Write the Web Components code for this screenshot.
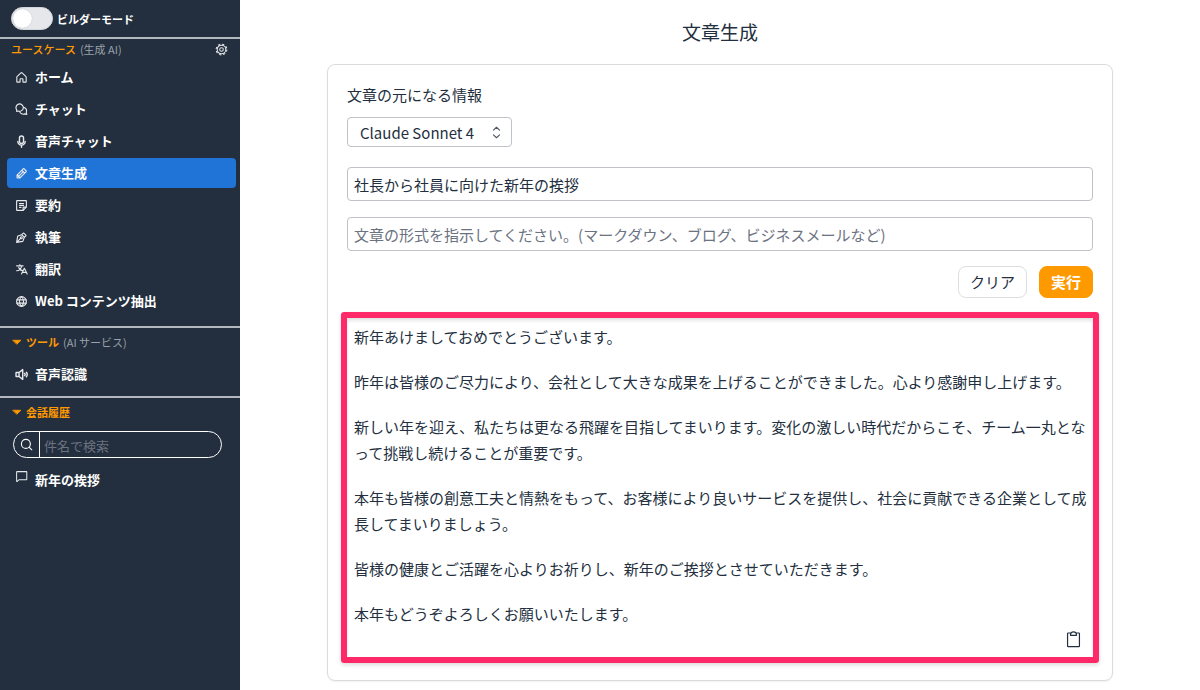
<!DOCTYPE html>
<html lang="ja">
<head>
<meta charset="utf-8">
<meta name="viewport" content="width=device-width, initial-scale=1">
<title>文章生成</title>
<style>
  body {
    margin: 0;
    background: #fff;
    color: #232f3e;
    font-family: "Noto Sans CJK JP", "Noto Sans", sans-serif;
    font-size: 15px;
    line-height: 26px;
  }
</style>
</head>
<body>
<app-layout>
  <app-sidebar slot="sidebar"></app-sidebar>
  <generate-page></generate-page>
</app-layout>

<script>
// Outline icons on a 256 grid
const ICONS = {
  gear: '<circle cx="128" cy="128" r="36"/><circle cx="128" cy="128" r="84"/><circle cx="128" cy="128" r="106" stroke-dasharray="44 39.2" stroke-linecap="butt"/>',
  house: '<path d="M156 212v-52a8 8 0 0 0-8-8h-40a8 8 0 0 0-8 8v52a8 8 0 0 1-8 8H44a8 8 0 0 1-8-8v-96a8 8 0 0 1 3-6l83-77a8 8 0 0 1 12 0l83 77a8 8 0 0 1 3 6v96a8 8 0 0 1-8 8h-48a8 8 0 0 1-8-8Z"/>',
  chats: '<path d="M34 134a72 72 0 1 1 32 24l-34 8Z"/><path d="M170 86a68 68 0 0 1 52 96l10 42-42-10a72 72 0 0 1-98-46"/>',
  mic: '<rect x="88" y="20" width="80" height="146" rx="40"/><path d="M128 202v38M200 128a72 72 0 0 1-144 0"/>',
  pencil: '<path d="M93 216H48a8 8 0 0 1-8-8v-45a8 8 0 0 1 2-5L165 34a8 8 0 0 1 11 0l45 45a8 8 0 0 1 0 11L98 214a8 8 0 0 1-5 2ZM136 64l56 56M164 92l-96 96M43 156l57 57"/>',
  note: '<path d="M88 92h80M88 128h80M88 164h32M157 224H40a8 8 0 0 1-8-8V40a8 8 0 0 1 8-8h176a8 8 0 0 1 8 8v117a8 8 0 0 1-2 5l-60 60a8 8 0 0 1-5 2ZM222 160h-62v62"/>',
  pen: '<circle cx="124" cy="132" r="20"/><path d="M32 224l78-78M32 224l118-20a8 8 0 0 0 6-5l28-75-52-52-75 28a8 8 0 0 0-5 6ZM184 124l30-30a8 8 0 0 0 0-12l-40-40a8 8 0 0 0-12 0l-30 30"/>',
  translate: '<path d="M240 216l-56-112-56 112M144 184h80M96 32v24M32 56h128M128 56a96 96 0 0 1-96 96M73 88a96 96 0 0 0 87 64"/>',
  globe: '<circle cx="128" cy="128" r="96"/><path d="M168 128c0 64-40 96-40 96s-40-32-40-96 40-96 40-96 40 32 40 96ZM37 96h182M37 160h182"/>',
  speaker: '<path d="M80 168H28a8 8 0 0 1-8-8V96a8 8 0 0 1 8-8h52l72-56v192ZM80 88v80M190 106a32 32 0 0 1 0 44M224 84a72 72 0 0 1 0 88"/>',
  search: '<circle cx="116" cy="116" r="88"/><path d="M178 178l54 54"/>',
  chat: '<path d="M78 192l-34 34a8 8 0 0 1-12-6V40a8 8 0 0 1 8-8h184a8 8 0 0 1 8 8v144a8 8 0 0 1-8 8Z"/>',
  clipboard: '<path d="M168 40h32a8 8 0 0 1 8 8v168a8 8 0 0 1-8 8H56a8 8 0 0 1-8-8V48a8 8 0 0 1 8-8h32M88 72v-8a40 40 0 0 1 80 0v8Z"/>',
  updown: '<path d="M68 80l60-56 60 56M68 176l60 56 60-56"/>',
  caret: '<path d="M28 84h200L128 180Z" fill="currentColor"/>'
};

class AppIcon extends HTMLElement {
  connectedCallback() {
    const weight = this.getAttribute('weight') || 22;
    this.attachShadow({ mode: 'open' });
    this.shadowRoot.innerHTML = `
      <style>
        :host { display: inline-flex; flex: none; width: 13px; height: 13px; }
        svg { width: 100%; height: 100%; }
      </style>
      <svg viewBox="0 0 256 256" fill="none" stroke="currentColor" stroke-width="${weight}"
        stroke-linecap="round" stroke-linejoin="round" aria-hidden="true">${ICONS[this.getAttribute('name')]}</svg>
    `;
  }
}
customElements.define('app-icon', AppIcon);

class AppLayout extends HTMLElement {
  connectedCallback() {
    this.attachShadow({ mode: 'open' });
    this.shadowRoot.innerHTML = `
      <style>
        :host { display: grid; grid-template-columns: 240px 1fr; min-height: 100vh; }
        main { min-width: 0; }
      </style>
      <slot name="sidebar"></slot>
      <main><slot></slot></main>
    `;
  }
}
customElements.define('app-layout', AppLayout);

class ModeSwitch extends HTMLElement {
  connectedCallback() {
    this.attachShadow({ mode: 'open' });
    this.shadowRoot.innerHTML = `
      <style>
        :host { display: block; padding: 7px 11px; }
        label {
          display: flex;
          align-items: center;
          gap: 4px;
          font-size: 11px;
          font-weight: 700;
          line-height: 16px;
          cursor: pointer;
        }
        input {
          appearance: none;
          box-sizing: border-box;
          display: flex;
          width: 42px;
          height: 23px;
          margin: 0;
          padding: 1px;
          border: 1px solid #d5d7db;
          border-radius: 12px;
          background: #e5e7eb;
        }
        input::before {
          content: '';
          width: 19px;
          height: 19px;
          border-radius: 50%;
          background: #fff;
          box-shadow: 0 0 1px #9ca3af;
        }
        input:checked { justify-content: flex-end; background: #2074d8; }
      </style>
      <label><input type="checkbox" role="switch"><slot></slot></label>
    `;
  }
}
customElements.define('mode-switch', ModeSwitch);

class NavItem extends HTMLElement {
  connectedCallback() {
    this.attachShadow({ mode: 'open' });
    this.shadowRoot.innerHTML = `
      <style>
        :host { display: block; }
        a {
          display: flex;
          align-items: center;
          gap: 7px;
          padding: 5px 8px;
          border-radius: 4px;
          color: #fff;
          font-size: 13px;
          font-weight: 700;
          line-height: 20px;
          text-decoration: none;
        }
        a:hover { background: #34435a; }
        app-icon { color: #e8eaed; }
        :host([active]) a { background: #2074d8; }
        :host([history]) app-icon { align-self: start; }
      </style>
      <a href="#${this.getAttribute('to') || ''}">
        <app-icon name="${this.getAttribute('icon')}" weight="${this.getAttribute('weight') || 22}"></app-icon>
        <span><slot></slot></span>
      </a>
    `;
  }
}
customElements.define('nav-item', NavItem);

class NavSection extends HTMLElement {
  connectedCallback() {
    const note = this.getAttribute('note');
    this.attachShadow({ mode: 'open' });
    this.shadowRoot.innerHTML = `
      <style>
        :host { display: block; border-top: 2px solid #b3b7be; }
        summary {
          display: flex;
          align-items: center;
          gap: 4px;
          padding: 6px 12px 9px;
          color: #ff9900;
          font-size: 11px;
          font-weight: 700;
          line-height: 16px;
          list-style: none;
          cursor: pointer;
        }
        app-icon { width: 10px; height: 10px; }
        small { color: #9aa1ab; font-size: 11px; font-weight: 400; }
      </style>
      <details open>
        <summary>
          <app-icon name="caret"></app-icon>
          <span>${this.getAttribute('heading')}</span>
          ${note ? `<small>${note}</small>` : ''}
        </summary>
        <slot></slot>
      </details>
    `;
  }
}
customElements.define('nav-section', NavSection);

class HistorySearch extends HTMLElement {
  connectedCallback() {
    this.attachShadow({ mode: 'open' });
    this.shadowRoot.innerHTML = `
      <style>
        :host { display: block; margin: 2px 18px 7px 13px; }
        label {
          display: flex;
          box-sizing: border-box;
          height: 27px;
          overflow: hidden;
          border: 1px solid #fff;
          border-radius: 14px;
        }
        app-icon { padding: 6px; color: #fff; }
        input {
          flex: 1;
          min-width: 0;
          padding: 2px 4px 0;
          border: 0;
          border-left: 1px solid #fff;
          outline: 0;
          background: none;
          color: #fff;
          font: inherit;
          font-size: 13px;
        }
        input::placeholder { color: #6b7280; opacity: 1; }
      </style>
      <label>
        <app-icon name="search"></app-icon>
        <input type="text" placeholder="件名で検索" aria-label="件名で検索">
      </label>
    `;
  }
}
customElements.define('history-search', HistorySearch);

class AppSidebar extends HTMLElement {
  connectedCallback() {
    this.attachShadow({ mode: 'open' });
    this.shadowRoot.innerHTML = `
      <style>
        :host { display: block; background: #232f3e; color: #fff; }
        header {
          display: flex;
          align-items: center;
          gap: 4px;
          padding: 1px 12px 3px 11px;
          border-top: 2px solid #b3b7be;
          font-size: 11px;
          line-height: 18px;
        }
        h2 { margin: 0; color: #ff9900; font-size: 11px; font-weight: 500; }
        small { flex: 1; color: #9aa1ab; font-size: 11px; }
        button { display: flex; padding: 0; border: 0; background: none; color: #e5e7eb; cursor: pointer; }
        nav { display: grid; gap: 2px; padding: 0 4px 7px 7px; }
        nav.cases { padding: 1px 4px 10px 7px; }
      </style>
      <mode-switch>ビルダーモード</mode-switch>
      <header>
        <h2>ユースケース</h2>
        <small>(生成 AI)</small>
        <button type="button" aria-label="設定"><app-icon name="gear" weight="20"></app-icon></button>
      </header>
      <nav class="cases">
        <nav-item icon="house" to="home">ホーム</nav-item>
        <nav-item icon="chats" to="chat">チャット</nav-item>
        <nav-item icon="mic" weight="28" to="voice">音声チャット</nav-item>
        <nav-item icon="pencil" to="generate" active>文章生成</nav-item>
        <nav-item icon="note" to="summarize">要約</nav-item>
        <nav-item icon="pen" to="writer">執筆</nav-item>
        <nav-item icon="translate" to="translate">翻訳</nav-item>
        <nav-item icon="globe" to="web">Web コンテンツ抽出</nav-item>
      </nav>
      <nav-section heading="ツール" note="(AI サービス)">
        <nav><nav-item icon="speaker" weight="28" to="transcribe">音声認識</nav-item></nav>
      </nav-section>
      <nav-section heading="会話履歴">
        <history-search></history-search>
        <nav><nav-item icon="chat" weight="20" to="history" history>新年の挨拶</nav-item></nav>
      </nav-section>
    `;
  }
}
customElements.define('app-sidebar', AppSidebar);

class ModelSelect extends HTMLElement {
  connectedCallback() {
    this.attachShadow({ mode: 'open' });
    this.shadowRoot.innerHTML = `
      <style>
        :host { display: grid; justify-items: start; gap: 9px; }
        div { display: grid; align-items: center; width: 165px; }
        select, app-icon { grid-area: 1 / 1; }
        select {
          appearance: none;
          box-sizing: border-box;
          width: 100%;
          height: 30px;
          padding: 2px 32px 0 12px;
          border: 1px solid #bfc2c7;
          border-radius: 4px;
          background: #fff;
          color: inherit;
          font: inherit;
        }
        app-icon { justify-self: end; margin-right: 9px; color: #4b5563; pointer-events: none; }
      </style>
      <label for="model">${this.getAttribute('label')}</label>
      <div>
        <select id="model"><option>${this.getAttribute('value')}</option></select>
        <app-icon name="updown"></app-icon>
      </div>
    `;
  }
}
customElements.define('model-select', ModelSelect);

class TextField extends HTMLElement {
  connectedCallback() {
    this.attachShadow({ mode: 'open' });
    this.shadowRoot.innerHTML = `
      <style>
        :host { display: block; }
        input {
          display: block;
          box-sizing: border-box;
          width: 100%;
          height: 34px;
          padding: 0 6px;
          border: 1px solid #bfc2c7;
          border-radius: 4px;
          color: inherit;
          font: inherit;
        }
        input::placeholder { color: #6b7280; opacity: 1; }
      </style>
      <input type="text">
    `;
    const input = this.shadowRoot.querySelector('input');
    input.value = this.getAttribute('value') || '';
    input.placeholder = this.getAttribute('placeholder') || '';
    input.setAttribute('aria-label', this.getAttribute('label'));
  }
}
customElements.define('text-field', TextField);

class AppButton extends HTMLElement {
  connectedCallback() {
    this.attachShadow({ mode: 'open' });
    this.shadowRoot.innerHTML = `
      <style>
        :host { display: block; }
        button {
          display: block;
          padding: 2px 11px;
          border: 1px solid #dcdee1;
          border-radius: 8px;
          background: #fff;
          color: inherit;
          font: inherit;
          cursor: pointer;
        }
        :host([primary]) button {
          border-color: #ff9900;
          background: #ff9900;
          color: #fff;
          font-weight: 700;
        }
      </style>
      <button type="button"><slot></slot></button>
    `;
  }
}
customElements.define('app-button', AppButton);

class ResultBox extends HTMLElement {
  connectedCallback() {
    this.attachShadow({ mode: 'open' });
    this.shadowRoot.innerHTML = `
      <style>
        :host {
          display: grid;
          margin: 0 -6px;
          padding: 6px 3px 8px 7px;
          border: 6px solid #ff2868;
          border-radius: 3px;
          box-shadow: inset 0 3px 4px -1px rgba(0, 0, 0, 0.14), 0 2px 4px rgba(0, 0, 0, 0.14);
        }
        .text { display: grid; gap: 19px; }
        ::slotted(p) { margin: 0; }
        button {
          display: flex;
          justify-self: end;
          margin-right: 7px;
          padding: 3px 0 0;
          border: 0;
          background: none;
          color: inherit;
          cursor: pointer;
        }
        app-icon { width: 19px; height: 19px; }
      </style>
      <div class="text"><slot></slot></div>
      <button type="button" aria-label="コピー"><app-icon name="clipboard" weight="16"></app-icon></button>
    `;
  }
}
customElements.define('result-box', ResultBox);

class GeneratePage extends HTMLElement {
  connectedCallback() {
    this.attachShadow({ mode: 'open' });
    this.shadowRoot.innerHTML = `
      <style>
        :host { display: block; padding: 19px 87px 10px; }
        h1 {
          margin: 0 0 19px;
          font-size: 19px;
          font-weight: 400;
          line-height: 26px;
          text-align: center;
        }
        section {
          display: grid;
          padding: 17px 19px;
          border: 1px solid #d9dbde;
          border-radius: 8px;
          box-shadow: 0 1px 2px rgba(0, 0, 0, 0.06);
        }
        .fields { display: grid; gap: 16px; margin-top: 20px; }
        .actions {
          display: flex;
          justify-content: flex-end;
          align-items: center;
          gap: 12px;
          margin: 15px 0 14px;
        }
      </style>
      <h1>文章生成</h1>
      <section>
        <model-select label="文章の元になる情報" value="Claude Sonnet 4"></model-select>
        <div class="fields">
          <text-field label="文章の元になる情報" value="社長から社員に向けた新年の挨拶"></text-field>
          <text-field label="文章の形式" placeholder="文章の形式を指示してください。(マークダウン、ブログ、ビジネスメールなど)"></text-field>
        </div>
        <div class="actions">
          <app-button>クリア</app-button>
          <app-button primary>実行</app-button>
        </div>
        <result-box>
          <p>新年あけましておめでとうございます。</p>
          <p>昨年は皆様のご尽力により、会社として大きな成果を上げることができました。心より感謝申し上げます。</p>
          <p>新しい年を迎え、私たちは更なる飛躍を目指してまいります。変化の激しい時代だからこそ、チーム一丸となって挑戦し続けることが重要です。</p>
          <p>本年も皆様の創意工夫と情熱をもって、お客様により良いサービスを提供し、社会に貢献できる企業として成長してまいりましょう。</p>
          <p>皆様の健康とご活躍を心よりお祈りし、新年のご挨拶とさせていただきます。</p>
          <p>本年もどうぞよろしくお願いいたします。</p>
        </result-box>
      </section>
    `;
  }
}
customElements.define('generate-page', GeneratePage);
</script>
</body>
</html>
